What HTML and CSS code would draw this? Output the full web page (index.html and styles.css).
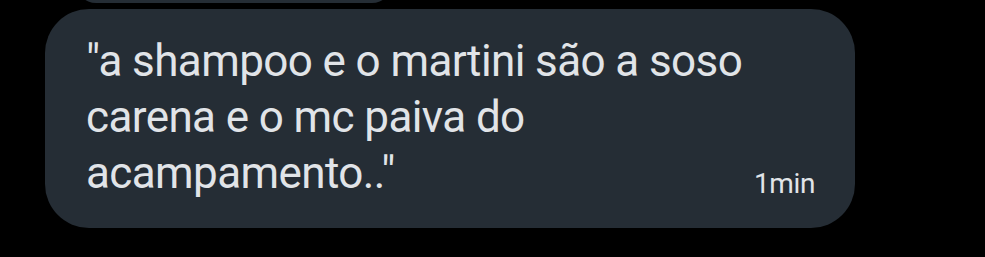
FILE: index.html
```html
<!DOCTYPE html>
<html lang="pt">
<head>
    <title>Mensagem</title>
    <link rel="stylesheet" href="styles.css">
</head>
<body>
    <div class="chat">
        <div class="bubble bubble-prev"></div>
        <div class="bubble bubble-main">
            <p class="msg-text">"a shampoo e o martini são a soso carena e o mc paiva do acampamento.."</p>
            <span class="msg-time">1min</span>
        </div>
    </div>
</body>
</html>
```

FILE: styles.css
```css
body {
    margin: 0;
    background-color: #000;
    font-family: Roboto, "Noto Sans", sans-serif;
}
.chat {
    display: flex;
    flex-direction: column;
    gap: 6px;
}
.bubble {
    background-color: #252d35;
    border-radius: 44px;
}
.bubble-prev {
    height: 40px;
    margin-top: -37px;
    margin-left: 76px;
    width: 316px;
    border-radius: 20px;
}
.bubble-main {
    margin-left: 45px;
    width: 810px;
    height: 219px;
    box-sizing: border-box;
    padding: 24px 40px 0 41px;
    display: flex;
    align-items: flex-end;
    justify-content: space-between;
}
.msg-text {
    margin: 0;
    align-self: flex-start;
    max-width: 680px;
    color: #e1e4e8;
    font-size: 44px;
    letter-spacing: -0.6px;
    line-height: 56px;
}
.msg-time {
    color: #e1e4e8;
    font-size: 28px;
    letter-spacing: -0.4px;
    margin-bottom: 28px;
}
```
